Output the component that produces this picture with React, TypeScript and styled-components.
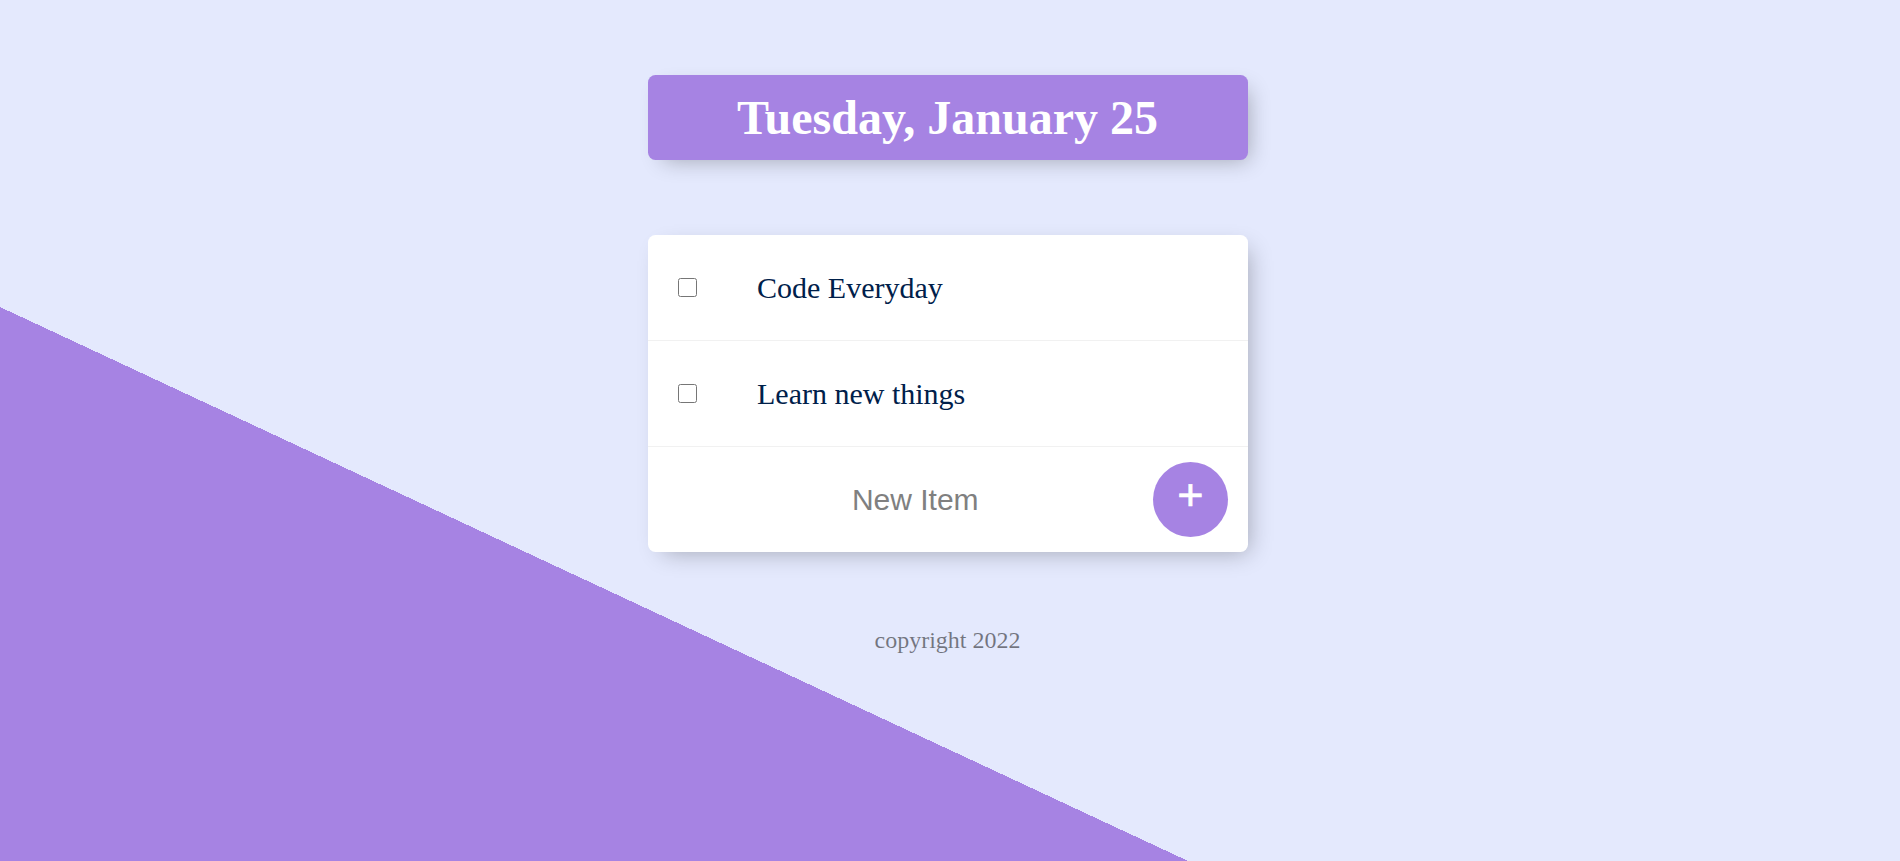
import React from "react";
import styled, { createGlobalStyle } from "styled-components";

const GlobalStyle = createGlobalStyle`
  html {
    min-height: 1500px;
    background-color: #E4E9FD;
    background-image: linear-gradient(25deg, #A683E3 50%, #E4E9FD 50%);
  }
  body {
    margin: 0 12px;
    padding-right: 5px;
    font-family: "Liberation Serif", "Times New Roman", serif;
  }
`;

const Card = styled.div<{ $heading?: boolean }>`
  width: 600px;
  margin: 75px auto;
  background: ${(p) => (p.$heading ? "#A683E3" : "#ffffff")};
  text-align: ${(p) => (p.$heading ? "center" : "left")};
  border-radius: 7.5px;
  box-shadow: 7.5px 7.5px 22.5px -7.5px rgba(0, 0, 0, 0.3);
`;

const Title = styled.h1`
  margin: 32px 0;
  padding: 15px;
  color: #ffffff;
  font-size: 48px;
  font-weight: bold;
  font-family: "Liberation Serif", "Times New Roman", serif;
`;

const Item = styled.div`
  min-height: 105px;
  display: flex;
  align-items: center;
  border-bottom: 1.5px solid #F1F1F1;
  &:last-child {
    border-bottom: 0;
  }
`;

const Check = styled.input`
  margin: 30px;
  width: 19.5px;
  height: 19.5px;
`;

const ItemText = styled.p`
  margin: 0;
  padding: 30px;
  font-size: 30px;
  font-weight: 200;
  color: #00204a;
  font-family: "Liberation Serif", "Times New Roman", serif;
`;

const AddForm = styled.form`
  min-height: 105px;
  display: flex;
  align-items: center;
  margin-left: 30px;
  text-align: center;
`;

const NewInput = styled.input`
  text-align: center;
  height: 90px;
  width: 469.5px;
  padding: 1.5px 3px;
  border: none;
  background: transparent;
  font-size: 30px;
  font-weight: 200;
  font-family: "Liberation Sans", Arial, sans-serif;
  &::placeholder {
    color: grey;
    opacity: 1;
  }
  &:focus {
    outline: none;
  }
`;

const AddButton = styled.button`
  min-height: 75px;
  width: 75px;
  border-radius: 50%;
  border: 0;
  background-color: #A683E3;
  color: #ffffff;
  font-size: 45px;
  font-family: "Liberation Sans", Arial, sans-serif;
  -webkit-text-stroke: 0.6px #ffffff;
  padding: 1.5px 9px 10px;
  line-height: normal;
  cursor: pointer;
`;

const Footer = styled.footer`
  color: rgba(0, 0, 0, 0.5);
  text-align: center;
  font-size: 24px;
`;

const items = ["Code Everyday", "Learn new things"];

export default function App() {
  return (
    <>
      <GlobalStyle />
      <Card $heading>
        <Title>Tuesday, January 25</Title>
      </Card>
      <Card>
        {items.map((t) => (
          <Item key={t}>
            <Check type="checkbox" />
            <ItemText>{t}</ItemText>
          </Item>
        ))}
        <AddForm onSubmit={(e: React.FormEvent) => e.preventDefault()}>
          <NewInput type="text" name="newItem" placeholder="New Item" autoComplete="off" />
          <AddButton type="submit" name="list">+</AddButton>
        </AddForm>
      </Card>
      <Footer>copyright 2022</Footer>
    </>
  );
}
